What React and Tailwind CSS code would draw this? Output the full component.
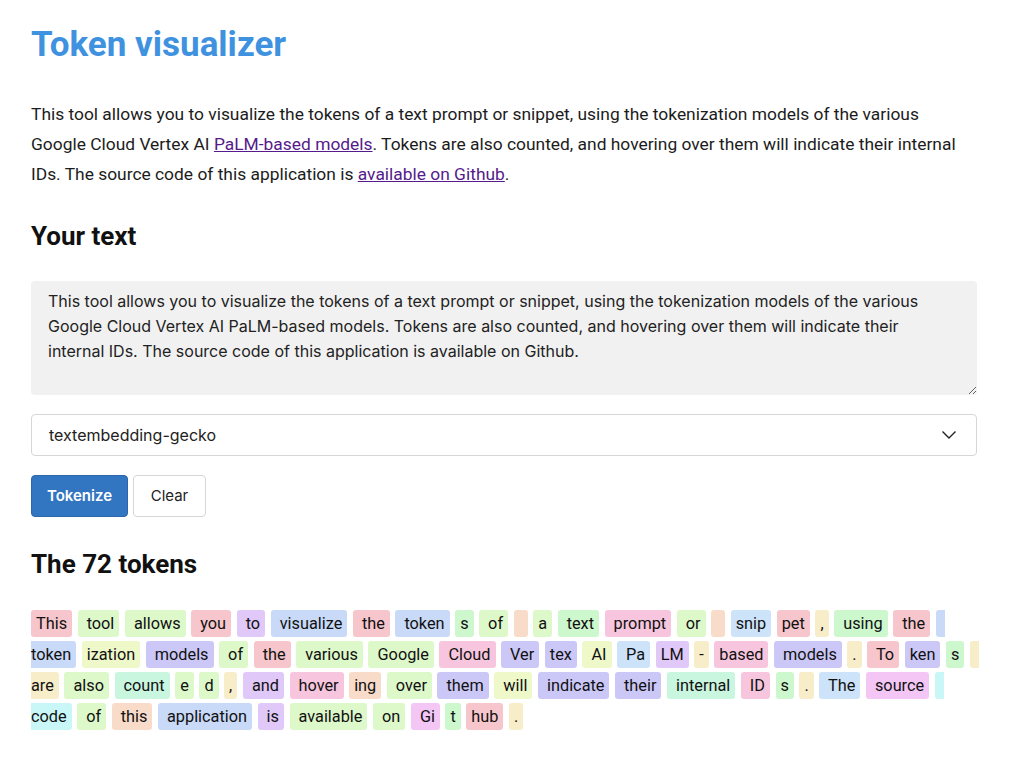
import React from "react";

const C = {
  red: "bg-[#f7c6cc]",
  pink: "bg-[#f7c6de]",
  mag: "bg-[#f3c6f6]",
  lav: "bg-[#e0c8f8]",
  vio: "bg-[#cbc8f8]",
  blue: "bg-[#c9d9f8]",
  lblue: "bg-[#cce3fa]",
  cyan: "bg-[#c9f7f7]",
  mint: "bg-[#c9f6df]",
  green: "bg-[#cdf7cc]",
  lime: "bg-[#ddf8c9]",
  ylime: "bg-[#eef8c9]",
  cream: "bg-[#f8edc9]",
  peach: "bg-[#f8dcc9]",
};

const tokens = [
  ["This", "red"], [" tool", "lime"], [" allows", "lime"], [" you", "red"], [" to", "lav"],
  [" visualize", "blue"], [" the", "red"], [" token", "blue"], ["s", "green"], [" of", "lime"],
  [" ", "peach"], ["a", "lime"], [" text", "green"], [" prompt", "pink"], [" or", "lime"],
  [" ", "peach"], ["snip", "lblue"], ["pet", "red"], [",", "cream"], [" using", "green"],
  [" the", "red"], [" token", "blue"], ["ization", "ylime"], [" models", "vio"], [" of", "lime"],
  [" the", "red"], [" various", "lime"], [" Google", "lime"], [" Cloud", "pink"], [" Ver", "vio"],
  ["tex", "vio"], [" AI", "ylime"], [" Pa", "lblue"], ["LM", "lav"], ["-", "cream"],
  ["based", "pink"], [" models", "vio"], [".", "cream"], [" To", "red"], ["ken", "vio"],
  ["s", "green"], [" are", "cream"], [" also", "lime"], [" count", "mint"], ["e", "lime"],
  ["d", "lime"], [",", "cream"], [" and", "lav"], [" hover", "pink"], ["ing", "peach"],
  [" over", "lime"], [" them", "vio"], [" will", "ylime"], [" indicate", "vio"], [" their", "vio"],
  [" internal", "mint"], [" ID", "pink"], ["s", "green"], [".", "cream"], [" The", "lblue"],
  [" source", "mag"], [" code", "cyan"], [" of", "lime"], [" this", "peach"], [" application", "blue"],
  [" is", "lav"], [" available", "lime"], [" on", "lime"], [" Gi", "mag"], ["t", "green"],
  ["hub", "red"], [".", "cream"],
];

const sample =
  "This tool allows you to visualize the tokens of a text prompt or snippet, using the tokenization models of the various Google Cloud Vertex AI PaLM-based models. Tokens are also counted, and hovering over them will indicate their internal IDs. The source code of this application is available on Github.";

export default function App() {
  return (
    <div className="min-h-[780px] bg-white px-[31px] pt-[24px] pb-10 font-['Roboto',sans-serif] text-[#1c1c1c]">
      <div className="w-[946px]">
        <h1 className="text-[35px] font-bold leading-[42px] text-[#3f92e0]">Token visualizer</h1>

        <p className="mt-[33px] text-[17.4px] leading-[30px]">
          This tool allows you to visualize the tokens of a text prompt or snippet, using the tokenization models of the
          various Google Cloud Vertex AI{" "}
          <a href="#" className="text-[#551a8b] underline">PaLM-based models</a>. Tokens are also counted, and hovering
          over them will indicate their internal IDs. The source code of this application is{" "}
          <a href="#" className="text-[#551a8b] underline">available on Github</a>.
        </p>

        <h2 className="mt-[31.5px] text-[26px] font-bold leading-[30px] text-[#111]">Your text</h2>

        <textarea
          readOnly
          value={sample}
          className="mt-[30.5px] block h-[114px] w-full rounded-[4px] border-0 bg-[#f1f1f1] pl-[17px] pr-[24px] pt-[8px] font-['Inter',sans-serif] text-[16px] leading-[25px] text-[#222] outline-none"
        />

        <div className="mt-[19px] flex h-[42px] items-center justify-between rounded-[4px] border border-[#d6d6d6] bg-white pl-[17px] pr-[19px] font-['Inter',sans-serif] text-[16px] text-[#222]">
          <span>textembedding-gecko</span>
          <svg width="16" height="10" viewBox="0 0 16 10" fill="none" stroke="#222" strokeWidth="1.4">
            <polyline points="1.5,1.5 8,8 14.5,1.5" />
          </svg>
        </div>

        <div className="mt-[19px] flex gap-[5px] font-['Inter',sans-serif]">
          <button className="h-[42px] w-[97px] rounded-[4px] border border-[#2b67aa] bg-[#3275c0] text-[15px] font-semibold text-white">
            Tokenize
          </button>
          <button className="h-[42px] w-[73px] rounded-[4px] border border-[#d6d6d6] bg-white text-[15px] text-[#222]">
            Clear
          </button>
        </div>

        <h2 className="mt-[32px] text-[26px] font-bold leading-[30px] text-[#111]">The 72 tokens</h2>

        <div className="mt-[28.5px] text-[16.3px] leading-[31px] text-[#111] whitespace-normal">
          {tokens.map(([t, c], i) => (
            <React.Fragment key={i}>
              <span className={`whitespace-pre-wrap rounded-[3px] px-[5px] py-[4px] mr-[1.5px] ${C[c]}`}>{t}</span>{" "}
            </React.Fragment>
          ))}
        </div>
      </div>
    </div>
  );
}
